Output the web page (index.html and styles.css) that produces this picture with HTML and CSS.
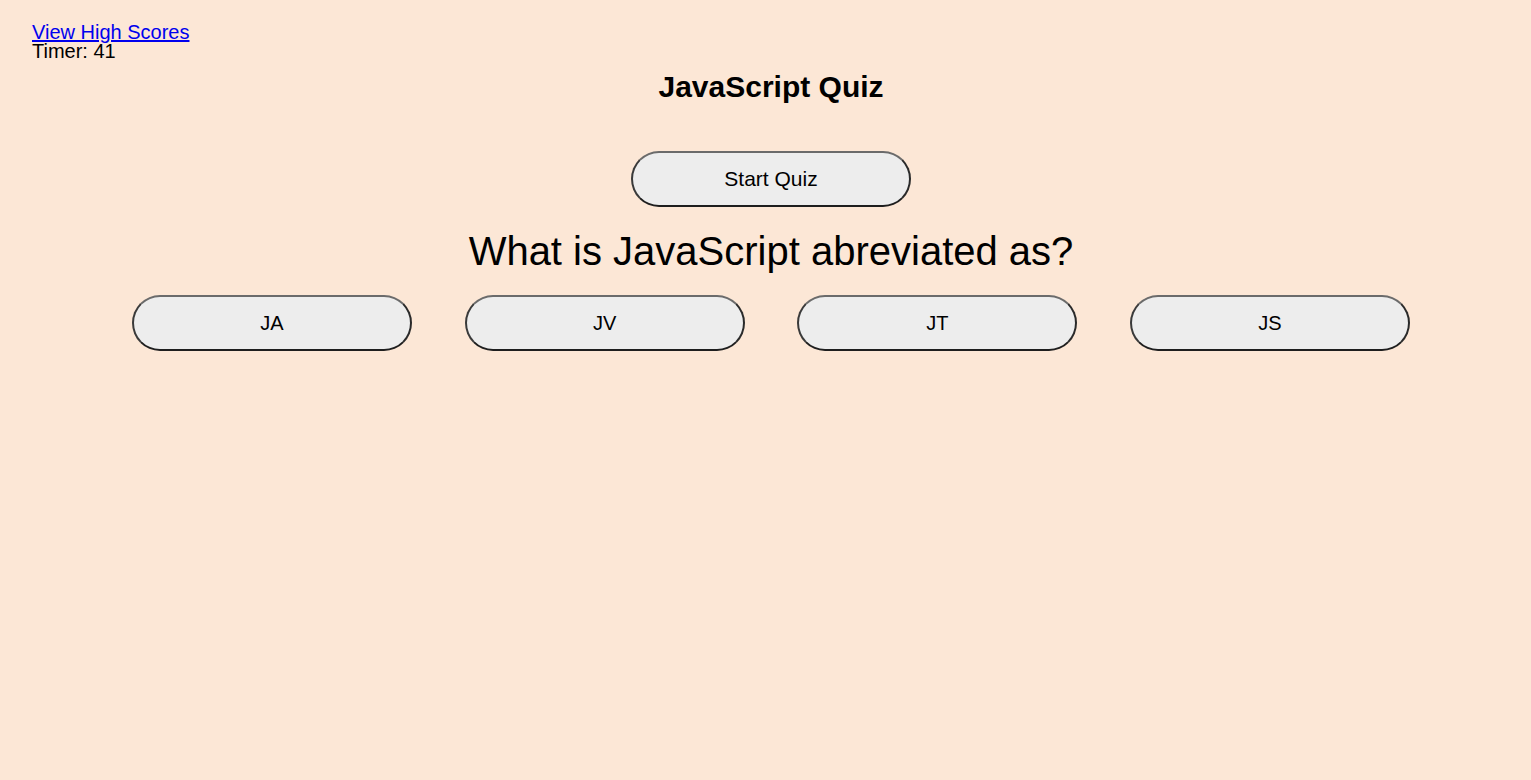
FILE: index.html
```html
<!DOCTYPE html>
<html lang="en">
<head>
<meta charset="utf-8">
<title>JavaScript Quiz</title>
<link rel="stylesheet" href="styles.css">
</head>
<body>
<header class="top">
  <a class="scores-link" href="#">View High Scores</a>
  <div class="timer">Timer: 41</div>
</header>
<main class="quiz">
  <h1 class="title">JavaScript Quiz</h1>
  <button class="btn start-btn">Start Quiz</button>
  <h2 class="question">What is JavaScript abreviated as?</h2>
  <div class="answers">
    <button class="btn answer-btn">JA</button>
    <button class="btn answer-btn">JV</button>
    <button class="btn answer-btn">JT</button>
    <button class="btn answer-btn">JS</button>
  </div>
</main>
</body>
</html>
```
FILE: styles.css
```css
html, body {
  height: 100%;
}
body {
  margin: 0;
  padding: 23px 21px 0 32px;
  box-sizing: border-box;
  background: #fce7d6;
  font-family: "Liberation Sans", Arial, Helvetica, sans-serif;
  color: #000;
}
.top {
  font-size: 20px;
  line-height: 19px;
}
.scores-link {
  color: #0000ee;
  text-decoration: underline;
}
.timer {
  display: block;
}
.quiz {
  display: flex;
  flex-direction: column;
  align-items: center;
}
.title {
  margin: 8px 0 0;
  font-size: 30px;
  font-weight: bold;
  line-height: 36px;
}
.btn {
  width: 280px;
  height: 56px;
  border-radius: 28px;
  border: 2px solid;
  border-color: #6b6b6b #2a2a2a #1e1e1e #3a3a3a;
  background: #ededed;
  font-family: "Liberation Sans", Arial, Helvetica, sans-serif;
  font-size: 21px;
  color: #000;
  padding: 0;
}
.start-btn {
  margin-top: 46px;
}
.question {
  margin: 21px 0 0;
  font-size: 40px;
  font-weight: normal;
  line-height: 46px;
}
.answers {
  margin-top: 21px;
  display: flex;
  justify-content: center;
  gap: 52.7px;
}
.answer-btn {
  font-size: 20px;
}
```
